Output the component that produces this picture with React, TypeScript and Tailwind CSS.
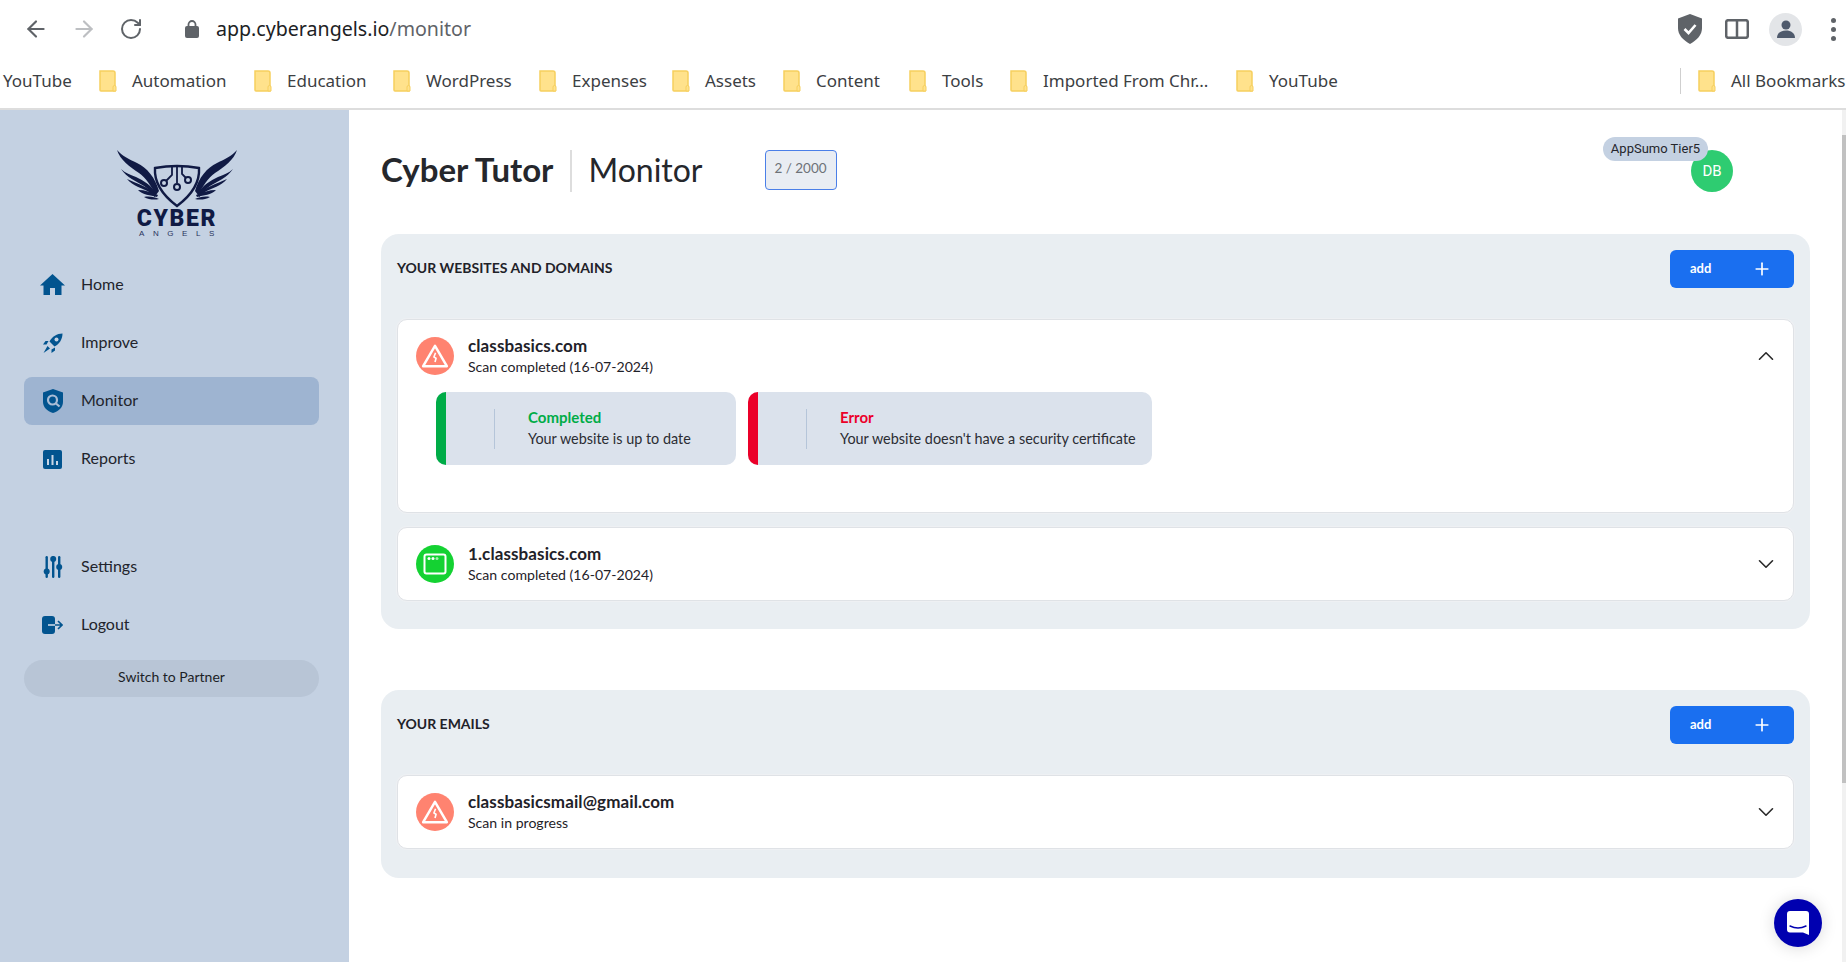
import { ArrowLeft, ArrowRight, ChevronDown, ChevronUp, Plus, RotateCw } from "lucide-react";

const bookmarks = [
  { label: "Automation", cls: "w-[155px]" },
  { label: "Education", cls: "w-[139px]" },
  { label: "WordPress", cls: "w-[146px]" },
  { label: "Expenses", cls: "w-[133px]" },
  { label: "Assets", cls: "w-[111px]" },
  { label: "Content", cls: "w-[126px]" },
  { label: "Tools", cls: "w-[101px]" },
  { label: "Imported From Chr...", cls: "w-[226px]" },
  { label: "YouTube", cls: "w-[120px]" },
];

const Folder = () => (
  <svg width="18" height="22" viewBox="0 0 18 22" className="shrink-0">
    <path d="M1 1h13a2 2 0 0 1 2 2v18H2a1 1 0 0 1-1-1z" fill="#ffe28c" stroke="#f6cf5e" strokeWidth="1.5" />
    <path d="M14 21v-4a1.400 1.400 0 0 1 3 0v4z" fill="#ffe28c" stroke="#f6cf5e" strokeWidth="1" />
  </svg>
);

const Logo = () => (
  <div className="ml-[11px] flex flex-col items-center">
    <svg width="120" height="60" viewBox="0 0 120 60" fill="#101a44">
      <path d="M0 0c3 10 13 17 22 23 7 5 12 13 17 22l3-4C38 27 30 18 20 13 12 9 5 6 0 0z" />
      <path d="M4 19c6 9 15 12 23 17 4 3 8 6 11 11l1-4c-5-8-12-12-20-16-5-2-11-4-15-8z" />
      <path d="M10 29c6 7 15 9 22 13l6 5 1-3c-8-7-18-10-29-15z" />
      <path d="M21 40c5 5 12 5 19 7l1-2c-7-3-13-5-20-5z" />
      <path d="M27 47c5 3 11 3 15 2-4-2-10-3-15-2z" />
      <path d="M120 0c-3 10-13 17-22 23-7 5-12 13-17 22l-3-4c4-14 12-23 22-28 8-4 15-7 20-13z" />
      <path d="M116 19c-6 9-15 12-23 17-4 3-8 6-11 11l-1-4c5-8 12-12 20-16 5-2 11-4 15-8z" />
      <path d="M110 29c-6 7-15 9-22 13l-6 5-1-3c8-7 18-10 29-15z" />
      <path d="M99 40c-5 5-12 5-19 7l-1-2c7-3 13-5 20-5z" />
      <path d="M93 47c-5 3-11 3-15 2 4-2 10-3 15-2z" />
      <path d="M38 18q22-4 44 0c1 14-6 26-22 38-16-12-23-24-22-38z" fill="none" stroke="#101a44" strokeWidth="2.400" />
      <path d="M55 16v9l-6 6M65 16v8l4 4M60 16v17" fill="none" stroke="#101a44" strokeWidth="1.800" />
      <circle cx="47" cy="33" r="3" fill="none" stroke="#101a44" strokeWidth="2" />
      <circle cx="71" cy="30" r="3" fill="none" stroke="#101a44" strokeWidth="2" />
      <circle cx="60" cy="37" r="3" fill="none" stroke="#101a44" strokeWidth="2" />
    </svg>
    <span className="mt-[-1px] font-['Roboto',sans-serif] text-[23px] leading-[20px] font-black tracking-[1.600px] text-[#101a44]">CYBER</span>
    <span className="pl-[8px] font-['Liberation_Sans',sans-serif] text-[8px] leading-[10px] tracking-[8.600px] text-[#28345c]">ANGELS</span>
  </div>
);

const HomeIcon = () => (
  <svg width="25" height="22" viewBox="0 0 25 22" fill="#02548f">
    <path d="M12.500 0 25 11.500h-3.500V21H15v-7h-5v7H3.500v-9.500H0z" />
  </svg>
);

const RocketIcon = () => (
  <svg width="20" height="20" viewBox="0 0 20 20" fill="#02548f">
    <path d="M19.500.500C14 .500 9 3.500 6.500 8.500l5 5c5-2.500 8-7.500 8-13z" />
    <circle cx="13.500" cy="6.500" r="2" fill="#c4d1e2" />
    <path d="M5.500 8H2.500L0 11.500h3.500zM12 14.500v3L8.500 20v-3.500zM4.500 13l2.500 2.500L.500 20z" />
  </svg>
);

const MonitorIcon = () => (
  <svg width="20" height="24" viewBox="0 0 20 24">
    <path d="M10 0l10 3.500V13c0 5-4 9-10 11C4 22 0 18 0 13V3.500z" fill="#02548f" />
    <circle cx="9.500" cy="11" r="4.500" fill="none" stroke="#a9bdd6" strokeWidth="2.200" />
    <path d="M13 14.500l3.500 3" stroke="#a9bdd6" strokeWidth="2.200" />
  </svg>
);

const ReportsIcon = () => (
  <svg width="19" height="19" viewBox="0 0 19 19">
    <rect width="19" height="19" rx="2" fill="#02548f" />
    <path d="M5 9v6M9.500 5v10M14 11v4" stroke="#c9d6e6" strokeWidth="2" />
  </svg>
);

const SettingsIcon = () => (
  <svg width="20" height="22" viewBox="0 0 20 22" fill="#02548f">
    <rect x="2.500" width="2.400" height="22" rx="1.200" />
    <rect x="9" width="2.400" height="22" rx="1.200" />
    <rect x="15" width="2.400" height="22" rx="1.200" />
    <circle cx="3.700" cy="15.500" r="3" />
    <circle cx="10.200" cy="3" r="3" />
    <circle cx="16.200" cy="11" r="3" />
  </svg>
);

const LogoutIcon = () => (
  <svg width="21" height="18" viewBox="0 0 21 18">
    <rect width="13" height="18" rx="3" fill="#02548f" />
    <path d="M6 9h7" stroke="#c9d6e6" strokeWidth="1.600" />
    <path d="M13 9h7M16 5l4 4-4 4" fill="none" stroke="#02548f" strokeWidth="1.600" />
  </svg>
);

const NavItem = ({ icon, label, active }: { icon: React.ReactNode; label: string; active?: boolean }) => (
  <div className={`flex h-12 items-center rounded-lg pl-4 ${active ? "bg-[#9eb4d1]" : ""}`}>
    <span className="flex w-[25px] justify-center">{icon}</span>
    <span className="ml-4 pb-[2px] text-[16px] text-[#22242c]">{label}</span>
  </div>
);

const WarnIcon = () => (
  <span className="flex size-[38px] shrink-0 items-center justify-center rounded-full bg-[#ff8370]">
    <svg width="28" height="26" viewBox="0 0 26 24" fill="none" stroke="#fff" strokeWidth="2.300" strokeLinejoin="round">
      <path d="M13 2.500 24 21.500H2z" />
      <path d="M13.500 9l-1.500 4 2 1-1 3.500" strokeWidth="1.500" />
    </svg>
  </span>
);

const OkIcon = () => (
  <span className="flex size-[38px] shrink-0 items-center justify-center rounded-full bg-[#14d232]">
    <svg width="24" height="22" viewBox="0 0 24 22">
      <rect x="1.500" y="1.500" width="21" height="19" rx="2" fill="#14d232" stroke="#fff" strokeWidth="2" />
      <circle cx="6" cy="5.500" r="1.500" fill="#fff" />
      <circle cx="10" cy="5.500" r="1.500" fill="#fff" />
      <circle cx="14" cy="5.500" r="1.500" fill="#a5eeb0" />
    </svg>
  </span>
);

const RowHead = ({ icon, title, sub, open }: { icon: React.ReactNode; title: string; sub: string; open?: boolean }) => (
  <div className="flex h-[72px] items-center pl-[18px] pr-[14px]">
    {icon}
    <div className="ml-[14px] flex flex-col pb-[1px]">
      <span className="text-[17px] leading-[22px] font-bold tracking-[0.1px] text-[#1f2229]">{title}</span>
      <span className="text-[14.100px] leading-[20px] text-[#1f2229]">{sub}</span>
    </div>
    <span className="ml-auto text-[#2a2a2a]">
      {open ? <ChevronUp size={26} strokeWidth={1.5} /> : <ChevronDown size={26} strokeWidth={1.5} />}
    </span>
  </div>
);

const StatusCard = ({ bar, color, title, text, cls }: { bar: string; color: string; title: string; text: string; cls: string }) => (
  <div className={`flex h-[73px] items-center overflow-hidden rounded-[10px] bg-[#dbe2ec] ${cls}`}>
    <div className={`h-full w-[10px] ${bar}`} />
    <div className="ml-[48px] h-[40px] w-[1px] bg-[#b5c5d9]" />
    <div className="ml-[33px] flex flex-col pb-[2px]">
      <span className={`text-[15px] leading-[22px] font-bold ${color}`}>{title}</span>
      <span className="text-[14.400px] leading-[22px] whitespace-nowrap text-[#2b2d33]">{text}</span>
    </div>
  </div>
);

const SectionHead = ({ title }: { title: string }) => (
  <div className="flex h-[38px] items-center justify-between">
    <h2 className="pb-[4px] text-[14px] font-bold text-[#1f2229]">{title}</h2>
    <button className="flex h-[38px] w-[124px] items-center rounded-md bg-[#1a6ff0] pl-5 pr-[22px] text-white">
      <span className="text-[13px] font-bold">add</span>
      <Plus size={20} strokeWidth={2} className="ml-auto" />
    </button>
  </div>
);

export default function App() {
  return (
    <div className="flex h-screen w-full flex-col overflow-hidden bg-white font-['Lato',sans-serif]">
      {/* browser chrome */}
      <div className="h-[110px] shrink-0 border-b-2 border-[#dddddd] font-['Noto_Sans',sans-serif]">
        <div className="flex h-[58px] items-center pl-[23px] pr-[10px]">
          <ArrowLeft size={26} strokeWidth={2} className="text-[#5f6368]" />
          <ArrowRight size={26} strokeWidth={2} className="ml-[22px] text-[#bdbfc2]" />
          <RotateCw size={24} strokeWidth={2} className="ml-[22px] text-[#5f6368]" />
          <svg width="14" height="18" viewBox="0 0 14 18" className="ml-[42px]" fill="#5f6368">
            <rect y="6" width="14" height="12" rx="2" />
            <path d="M3.500 7V4.500a3.500 3.500 0 0 1 7 0V7" fill="none" stroke="#5f6368" strokeWidth="1.800" />
          </svg>
          <span className="ml-[17px] text-[19.600px] text-[#202124]">
            app.cyberangels.io<span className="text-[#5f6368]">/monitor</span>
          </span>
          <svg width="26" height="30" viewBox="0 0 26 30" className="ml-auto">
            <path d="M13 0l12 4.500V14c0 7-5 12-12 16C6 26 1 21 1 14V4.500z" fill="#5f6368" />
            <path d="M7.500 15l4 4 7-8" fill="none" stroke="#fff" strokeWidth="2.600" />
          </svg>
          <svg width="24" height="20" viewBox="0 0 24 20" className="ml-[22px]" fill="none" stroke="#5f6368" strokeWidth="2.500">
            <rect x="1.200" y="1.200" width="21.600" height="17.600" rx="2" />
            <path d="M12 1v18" />
          </svg>
          <span className="ml-[20px] flex size-[33px] items-center justify-center rounded-full bg-[#e3e5e8]">
            <svg width="20" height="20" viewBox="0 0 20 20" fill="#4f5a6c">
              <circle cx="10" cy="6" r="4.500" />
              <path d="M1 19c0-5 4-7.500 9-7.500s9 2.500 9 7.500z" />
            </svg>
          </span>
          <span className="ml-[29px] flex flex-col gap-[4px]">
            <span className="size-[5px] rounded-full bg-[#5f6368]" />
            <span className="size-[5px] rounded-full bg-[#5f6368]" />
            <span className="size-[5px] rounded-full bg-[#5f6368]" />
          </span>
        </div>
        <div className="flex h-[50px] items-center whitespace-nowrap pb-[5px] pl-[3px] text-[17px] text-[#3c4043]">
          <span className="w-[96px]">YouTube</span>
          {bookmarks.map((b) => (
            <span key={b.label} className={`flex items-center gap-[15px] ${b.cls}`}>
              <Folder />
              {b.label}
            </span>
          ))}
          <span className="ml-[324px] h-[26px] w-[1px] bg-[#cfcfcf]" />
          <span className="ml-[17px] flex items-center gap-[15px]">
            <Folder />
            All Bookmarks
          </span>
        </div>
      </div>

      <div className="flex min-h-0 flex-1">
        {/* sidebar */}
        <aside className="w-[349px] shrink-0 bg-[#c4d1e2] pl-6 pr-[30px] pt-10">
          <Logo />
          <nav className="mt-[22px] flex flex-col gap-[10px]">
            <NavItem icon={<HomeIcon />} label="Home" />
            <NavItem icon={<RocketIcon />} label="Improve" />
            <NavItem icon={<MonitorIcon />} label="Monitor" active />
            <NavItem icon={<ReportsIcon />} label="Reports" />
            <div className="mt-[50px]">
              <NavItem icon={<SettingsIcon />} label="Settings" />
            </div>
            <NavItem icon={<LogoutIcon />} label="Logout" />
          </nav>
          <button className="mt-[11px] h-[37px] w-full rounded-full bg-[#b8c5d6] pb-[5px] text-[14px] text-[#1c1e26]">
            Switch to Partner
          </button>
        </aside>

        {/* main */}
        <main className="min-w-0 flex-1 pl-8 pr-8 pt-10">
          <header className="relative flex h-[42px] items-center">
            <h1 className="pb-[2px] text-[33px] font-bold text-[#25272c]">Cyber Tutor</h1>
            <span className="ml-[17px] h-[42px] w-[2px] bg-[#dddddd]" />
            <span className="ml-[16px] pb-[2px] text-[32px] text-[#25272c]">Monitor</span>
            <span className="ml-[62px] flex h-[40px] w-[72px] items-center justify-center self-start rounded border border-[#4a7fe8] bg-[#e9edf3] pb-[3px] text-[13.500px] text-[#6d7278]">
              2 / 2000
            </span>
            <span className="absolute left-[1310px] top-0 flex size-[42px] items-center justify-center rounded-full bg-[#2ecc71] font-['Roboto',sans-serif] text-[15px] text-white">
              DB
            </span>
            <span className="absolute left-[1222px] top-[-13px] flex h-[24px] w-[105px] items-center justify-center rounded-full bg-[#c4d1e2] font-['Roboto',sans-serif] text-[13px] text-[#24262c]">
              AppSumo Tier5
            </span>
          </header>

          <section className="mt-[42px] rounded-[18px] bg-[#e9eef2] px-4 pb-[28px] pt-4">
            <SectionHead title="YOUR WEBSITES AND DOMAINS" />
            <div className="mt-[31px] rounded-[10px] border border-[#dfe2e6] bg-white pb-[47px] ring-1 ring-[#eef0f3]">
              <RowHead icon={<WarnIcon />} title="classbasics.com" sub="Scan completed (16-07-2024)" open />
              <div className="ml-[38px] flex gap-3">
                <StatusCard bar="bg-[#00ac47]" color="text-[#00ac47]" title="Completed" text="Your website is up to date" cls="w-[300px]" />
                <StatusCard bar="bg-[#eb0029]" color="text-[#eb0029]" title="Error" text="Your website doesn't have a security certificate" cls="w-[404px]" />
              </div>
            </div>
            <div className="mt-[14px] rounded-[10px] border border-[#dfe2e6] bg-white ring-1 ring-[#eef0f3]">
              <RowHead icon={<OkIcon />} title="1.classbasics.com" sub="Scan completed (16-07-2024)" />
            </div>
          </section>

          <section className="mt-[61px] rounded-[18px] bg-[#e9eef2] px-4 pb-[29px] pt-4">
            <SectionHead title="YOUR EMAILS" />
            <div className="mt-[31px] rounded-[10px] border border-[#dfe2e6] bg-white ring-1 ring-[#eef0f3]">
              <RowHead icon={<WarnIcon />} title="classbasicsmail@gmail.com" sub="Scan in progress" />
            </div>
          </section>
        </main>

        {/* page scrollbar */}
        <div className="w-[4px] shrink-0 bg-[#f1f1f1] pt-[25px]">
          <div className="h-[648px] bg-[#c1c1c1]" />
        </div>
      </div>

      {/* chat launcher */}
      <button className="fixed bottom-[15px] right-[24px] flex size-12 items-center justify-center rounded-full bg-[#0000b0] shadow-[0_1px_16px_rgba(0,0,0,0.15)]">
        <svg width="22" height="24" viewBox="0 0 22 24">
          <path d="M3 0h16a3 3 0 0 1 3 3v21l-6-2.500H3a3 3 0 0 1-3-3V3a3 3 0 0 1 3-3z" fill="#fff" />
          <path d="M3 15c5 2.500 11 2.500 16 0" fill="none" stroke="#0000b0" strokeWidth="1.400" strokeLinecap="round" />
        </svg>
      </button>
    </div>
  );
}
